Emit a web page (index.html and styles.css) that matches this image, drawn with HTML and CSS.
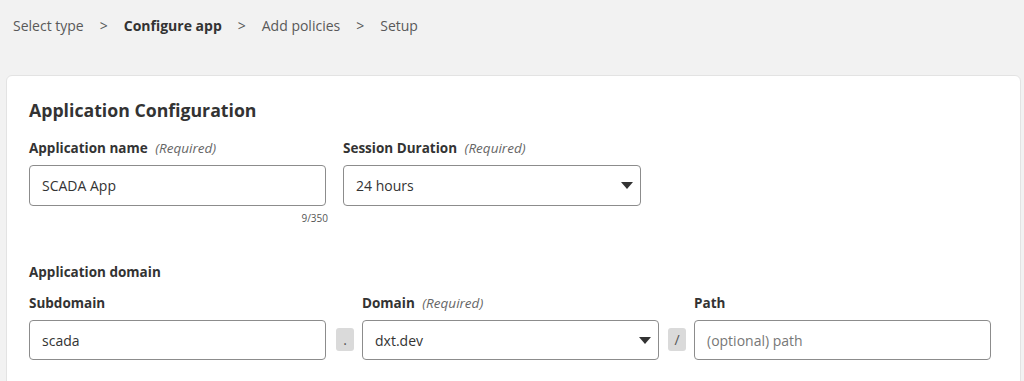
FILE: index.html
```html
<!DOCTYPE html>
<html lang="en">
<head>
    <meta charset="UTF-8">
    <meta name="viewport" content="width=device-width, initial-scale=1.0">
    <title>Configure app</title>
    <link rel="stylesheet" href="styles.css">
</head>
<body>
    <nav class="breadcrumb">
        <span class="crumb">Select type</span>
        <span class="sep">&gt;</span>
        <span class="crumb current">Configure app</span>
        <span class="sep">&gt;</span>
        <span class="crumb">Add policies</span>
        <span class="sep">&gt;</span>
        <span class="crumb">Setup</span>
    </nav>

    <div class="card">
        <h1>Application Configuration</h1>

        <div class="row">
            <div class="field">
                <label for="appName">Application name <em>(Required)</em></label>
                <input type="text" id="appName" value="SCADA App">
                <div class="counter">9/350</div>
            </div>
            <div class="field">
                <label>Session Duration <em>(Required)</em></label>
                <div class="select">
                    <span>24 hours</span>
                    <svg class="caret" width="12" height="7" viewBox="0 0 12 7"><path d="M0 0h12L6 7z" fill="#333"/></svg>
                </div>
            </div>
        </div>

        <h2>Application domain</h2>

        <div class="row domain-row">
            <div class="field">
                <label for="subdomain">Subdomain</label>
                <input type="text" id="subdomain" value="scada">
            </div>
            <span class="joiner">.</span>
            <div class="field">
                <label>Domain <em>(Required)</em></label>
                <div class="select">
                    <span>dxt.dev</span>
                    <svg class="caret" width="12" height="7" viewBox="0 0 12 7"><path d="M0 0h12L6 7z" fill="#333"/></svg>
                </div>
            </div>
            <span class="joiner">/</span>
            <div class="field">
                <label for="path">Path</label>
                <input type="text" id="path" placeholder="(optional) path">
            </div>
        </div>
    </div>
</body>
</html>
```

FILE: styles.css
```css
* {
    margin: 0;
    padding: 0;
    box-sizing: border-box;
}

body {
    font-family: 'Open Sans', 'Noto Sans', sans-serif;
    background: #f2f2f2;
    color: #333;
    height: 100vh;
    overflow: hidden;
}

.breadcrumb {
    display: flex;
    align-items: flex-start;
    gap: 16px;
    padding: 15px 13px 0;
    height: 75px;
    font-size: 14px;
    line-height: 22px;
    color: #595959;
}

.breadcrumb .current {
    color: #333;
    font-weight: 700;
}

.card {
    margin: 0 3px 0 6px;
    background: #fff;
    border: 1px solid #e3e3e3;
    border-radius: 6px;
    padding: 21px 22px 0;
    height: 320px;
}

h1 {
    font-size: 17.7px;
    font-weight: 700;
    line-height: 26px;
    margin-bottom: 15px;
}

h2 {
    font-size: 13.5px;
    font-weight: 700;
    line-height: 20px;
    margin-top: 37px;
}

.row {
    display: flex;
    gap: 17px;
}

.domain-row {
    gap: 0;
    margin-top: 11px;
    align-items: flex-end;
}

.field {
    width: 297px;
    display: flex;
    flex-direction: column;
}

.row .field:nth-child(2) {
    width: 298px;
}

label {
    font-size: 13.5px;
    font-weight: 700;
    line-height: 20px;
    margin-bottom: 7px;
}

label em {
    font-weight: 400;
    color: #666;
    font-size: 13.5px;
    margin-left: 4px;
}

input[type="text"],
.select {
    height: 41px;
    border: 1px solid #8c8c8c;
    border-radius: 4px;
    padding: 0 12px;
    font-family: inherit;
    font-size: 14px;
    color: #333;
    background: #fff;
}

.domain-row input[type="text"],
.domain-row .select {
    height: 40px;
}

input::placeholder {
    color: #777;
}

.select {
    display: flex;
    align-items: center;
    justify-content: space-between;
    padding-right: 7px;
}

.counter {
    font-size: 10px;
    line-height: 14px;
    color: #555;
    text-align: right;
    margin-top: 5px;
    margin-right: -2px;
}

.joiner {
    width: 18px;
    height: 23px;
    margin: 0 8px 9px 10px;
    background: #dadada;
    border-radius: 3px;
    color: #555;
    font-size: 14px;
    line-height: 23px;
    text-align: center;
}

.joiner + .field + .joiner {
    margin: 0 8px 9px 9px;
}
```
